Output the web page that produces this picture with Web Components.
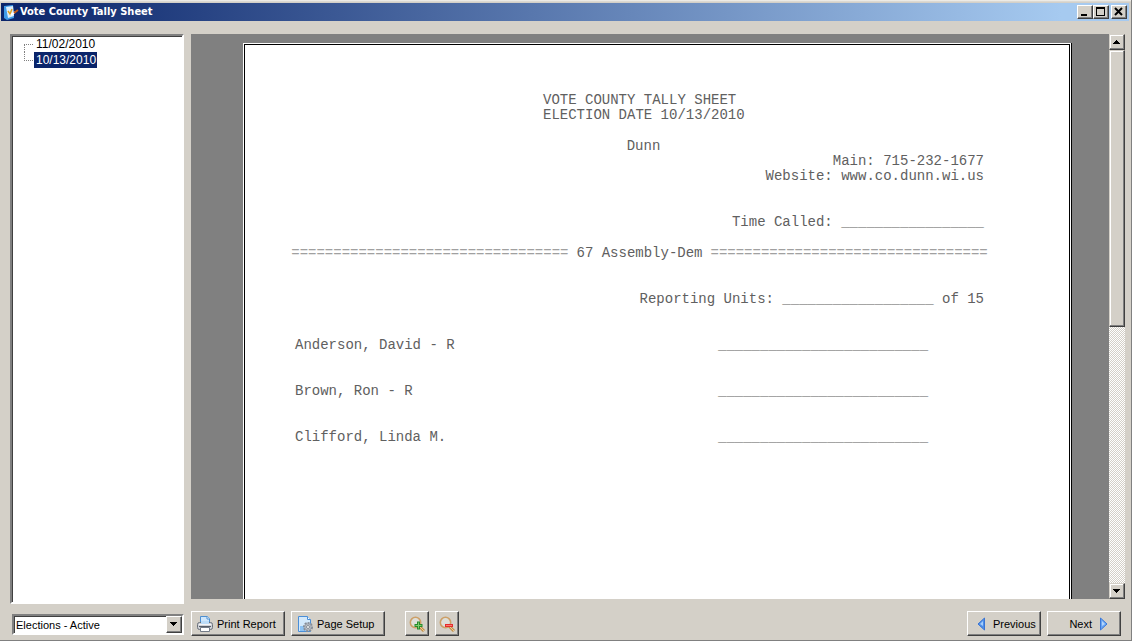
<!DOCTYPE html>
<html lang="en">
<head>
<meta charset="utf-8">
<title>Vote County Tally Sheet</title>
<style>
html, body { height: 100%; margin: 0; }
body { background: #d4d0c8; overflow: hidden; font: 11px/14px "Liberation Sans", Arial, sans-serif; color: #000; }
</style>
</head>
<body>
<tally-window></tally-window>
<script>
const define = (name, html, setup) => customElements.define(name, class extends HTMLElement {
  connectedCallback() {
    if (this.shadowRoot) return;
    const t = document.createElement('template');
    t.innerHTML = html;
    this.attachShadow({ mode: 'open' }).append(t.content.cloneNode(true));
    if (setup) setup(this, this.shadowRoot);
  }
});

const icons = {
  app: `<path d="M1 2l9-1 1 13-7 2-3-2z" fill="#3f9be8"/><path d="M3 3l7-1 1 10-6 2z" fill="#dceefb"/><path d="M5 7l2 3 2-5" fill="none" stroke="#e0a020" stroke-width="1.500"/><path d="M8 11l4-3" stroke="#fff" stroke-width="2"/><path d="M11 9l4-3" stroke="#c05818" stroke-width="2"/>`,
  print: `<path d="M3.500 8V.5h7l2 2V8z" fill="#cfe6fb" stroke="#4d8fd0"/><path d="M10 .5V3h3" fill="#fff" stroke="#4d8fd0"/><rect x=".5" y="6.500" width="15" height="7" rx="2" fill="#cfd2d8" stroke="#6b717b"/><path d="M4 5h8v3H4z" fill="#bcdcf8"/><path d="M2 8.500h12" stroke="#f4f4f6"/><path d="M3.500 11.500h9v4h-9z" fill="#fff" stroke="#737b87"/><path d="M2 10.500h12" stroke="#565d68"/>`,
  setup: `<path d="M1.500.5h9l3 3v12h-12z" fill="#d3e9fc" stroke="#4a8fd8"/><path d="M10.500.5v3h3" fill="#fff" stroke="#4a8fd8"/><path d="M3 10h8v5H3z" fill="#8fc3f3"/><circle cx="11" cy="11" r="4" fill="#c4c9d0" stroke="#858c97" stroke-width="2" stroke-dasharray="2 1"/><circle cx="11" cy="11" r="3" fill="#c4c9d0" stroke="#a3a9b3"/><circle cx="11" cy="11" r="1.500" fill="#fff" stroke="#858c97"/>`,
  zoomin: `<path d="M10 10l5 5" stroke="#c49149" stroke-width="3"/><path d="M10 10l5 5" stroke="#edc993"/><circle cx="6.500" cy="6.500" r="5.200" fill="#dedfda" stroke="#cda068" stroke-width="1.600"/><path d="M9.500 5.500v8M5.500 9.500h8" stroke="#288b2c" stroke-width="3"/><path d="M9.500 6.500v6M6.500 9.500h6" stroke="#7fce70"/>`,
  zoomout: `<path d="M10 10l5 5" stroke="#c49149" stroke-width="3"/><path d="M10 10l5 5" stroke="#edc993"/><circle cx="6.500" cy="6.500" r="5.200" fill="#dedfda" stroke="#cda068" stroke-width="1.600"/><path d="M6 9.500h8" stroke="#e42d2d" stroke-width="3"/><path d="M7 9.500h6" stroke="#ff7b72"/>`,
  prev: `<path d="M11.500 2v12L5 8z" fill="#4f90ea" stroke="#3a74d2"/><path d="M10 5v5L7 8z" fill="#a5cdfb"/>`,
  next: `<path d="M4.500 2v12L11 8z" fill="#6ba6f3" stroke="#3b78d8"/><path d="M6 5v5l3-2z" fill="#b3d5fc"/>`
};
const svg = n => `<svg viewBox="0 0 16 16" width="16" height="16" aria-hidden="true">${icons[n]}</svg>`;

define('app-icon', `<style>:host{display:block;width:16px;height:16px;flex:none}svg{display:block}</style>`,
  (el, root) => root.append(document.createRange().createContextualFragment(svg(el.getAttribute('name')))));

define('tool-button', `
<style>
:host { display: block; }
button { box-sizing: border-box; width: 100%; height: 25px; margin: 0; padding: 0 var(--pad, 5px); display: flex; align-items: center; justify-content: var(--justify, flex-start); gap: 4px; background: #d4d0c8; color: #000; font: inherit; white-space: nowrap;
  border: 1px solid; border-color: #fff #404040 #404040 #fff; border-radius: 0; box-shadow: inset -1px -1px #808080; }
</style>
<button type="button"><slot></slot></button>`, (el, root) => {
  if (el.title) root.querySelector('button').setAttribute('aria-label', el.title);
});

define('title-bar', `
<style>
:host { display: flex; align-items: center; gap: 1px; height: 18px; padding: 0 2px; background: linear-gradient(90deg, #0a246a, #a6caf0 94%); color: #fff; }
h1 { flex: 1; margin: 0; font: bold 11px/18px "DejaVu Sans Condensed", "DejaVu Sans", sans-serif; font-stretch: condensed; }
div { display: flex; }
button { box-sizing: border-box; width: 16px; height: 14px; padding: 0; background: #d4d0c8; border: 1px solid; border-color: #fff #404040 #404040 #fff; box-shadow: inset -1px -1px #808080; }
.close { margin-left: 2px; }
svg { display: block; }
</style>
<app-icon name="app"></app-icon>
<h1><slot></slot></h1>
<div>
<button type="button" aria-label="Minimize"><svg width="14" height="12"><path d="M3 8h6v2H3z"/></svg></button>
<button type="button" aria-label="Maximize"><svg width="14" height="12"><path d="M2 1h9v9H2zM3 3v6h7V3z" fill-rule="evenodd"/></svg></button>
<button type="button" class="close" aria-label="Close"><svg width="14" height="12"><path d="M3 2l7 7M10 2L3 9" stroke="#000" stroke-width="2"/></svg></button>
</div>`);

define('election-tree', `
<style>
:host { display: block; box-sizing: border-box; background: #fff; border: 2px solid; border-color: #808080 #fff #fff #808080; box-shadow: inset 1px 1px #404040; font-size: 12px; }
ul { list-style: none; margin: 0; padding: 0 0 0 12px; }
li { display: flex; height: 16px; }
li::before { content: ""; box-sizing: border-box; width: 9px; height: 8px; border: 1px dotted #808080; border-width: 1px 0 0 1px; margin-top: 8px; }
li:last-child::before { border-width: 0 0 1px 1px; margin-top: 0; height: 9px; }
a { color: #000; text-decoration: none; line-height: 16px; padding: 0 1px 0 2px; margin-left: 1px; }
a[aria-current] { background: #0a246a; color: #fff; }
</style>
<ul><li><a href="#nov">11/02/2010</a></li><li><a href="#oct" aria-current="true">10/13/2010</a></li></ul>`);

define('tally-report', `
<style>
:host { display: block; background: #fff; border: 1px solid #fff; border-bottom: 0; box-shadow: 1px 0 #000; box-sizing: border-box; }
article { box-sizing: border-box; min-height: 100%; border: 1px solid #000; border-bottom: 0; padding: 48px 85px 0 50px; font: 14px/15px "Liberation Mono", "Courier New", monospace; color: #606060; white-space: pre; display: flex; flex-direction: column; gap: 31px; }
h2, p { margin: 0; font: inherit; }
.head { display: flex; flex-direction: column; gap: 16px; }
.title { width: 202px; margin-left: 248px; }
.county { text-align: center; margin-left: 8px; }
.right { text-align: right; }
.race { display: flex; justify-content: center; gap: 8px; margin-top: -15px; }
.race span { color: #a0a0a0; }
.row { display: grid; grid-template-columns: 423px 1fr; }
</style>
<article>
<div class="head">
<h2 class="title">VOTE COUNTY TALLY SHEET
ELECTION DATE 10/13/2010</h2>
<div><p class="county">Dunn</p><p class="right">Main: 715-232-1677
Website: www.co.dunn.wi.us</p></div>
</div>
<p class="right">Time Called: _________________</p>
<h2 class="race"><span>=================================</span>67 Assembly-Dem<span>=================================</span></h2>
<p class="right">Reporting Units: __________________ of 15</p>
<div class="row"><span>Anderson, David - R</span><span>_________________________</span></div>
<div class="row"><span>Brown, Ron - R</span><span>_________________________</span></div>
<div class="row"><span>Clifford, Linda M.</span><span>_________________________</span></div>
</article>`);

define('scroll-bar', `
<style>
:host { display: flex; flex-direction: column; flex: none; width: 16px; background: repeating-conic-gradient(#fff 0 25%, #d4d0c8 0 50%) 0 0 / 2px 2px; }
button, .thumb { box-sizing: border-box; width: 16px; padding: 0; background: #d4d0c8; border: 1px solid; border-color: #d4d0c8 #404040 #404040 #d4d0c8; box-shadow: inset -1px -1px #808080, inset 1px 1px #fff; }
button { height: 16px; flex: none; }
.track { flex: 1; }
.thumb { height: 52%; }
svg { display: block; }
</style>
<button type="button" aria-label="Scroll up"><svg width="14" height="14"><path d="M3 9h7v-1h-1v-1h-1v-1h-1v-1h-1v1h-1v1h-1v1h-1z"/></svg></button>
<div class="track"><div class="thumb"></div></div>
<button type="button" aria-label="Scroll down"><svg width="14" height="14"><path d="M3 5h7v1h-1v1h-1v1h-1v1h-1v-1h-1v-1h-1v-1h-1z"/></svg></button>`);

define('election-filter', `
<style>
:host { display: flex; box-sizing: border-box; height: 21px; position: relative; background: #fff; border: 2px solid; border-color: #808080 #fff #fff #808080; box-shadow: inset 1px 1px #404040; }
select { appearance: none; flex: 1; min-width: 0; border: 0; margin: 0; padding: 0 17px 0 2px; background: none; font: inherit; color: #000; }
i { position: absolute; right: 0; top: 0; box-sizing: border-box; width: 16px; height: 17px; background: #d4d0c8; border: 1px solid; border-color: #fff #404040 #404040 #fff; box-shadow: inset -1px -1px #808080; pointer-events: none; }
svg { display: block; }
</style>
<select aria-label="Elections"><option>Elections - Active</option></select>
<i><svg width="14" height="15"><path d="M3 5h7v1h-1v1h-1v1h-1v1h-1v-1h-1v-1h-1v-1h-1z"/></svg></i>`);

define('tally-window', `
<style>
:host { display: grid; box-sizing: border-box; height: 100vh; grid-template: 18px minmax(0, 1fr) 41px / 183px minmax(0, 1fr); padding: 3px 2px 0 1px; border: solid #808080; border-width: 0 1px 1px 0; background: linear-gradient(#f4f3f0, #d4d0c8 2px); }
title-bar { grid-column: 1 / 3; }
election-tree { margin: 13px 0 -5px 9px; }
.viewer { display: flex; margin: 13px 4px 0 7px; min-height: 0; }
.canvas { flex: 1; min-width: 0; display: flex; overflow: hidden; background: #808080; padding: 9px 38px 0 52px; }
tally-report { flex: 1; min-width: 0; }
election-filter { margin: 15px 0 0 11px; }
footer { display: flex; gap: 6px; padding: 12px 8px 0 7px; }
.wide { width: 94px; }
.icon { width: 24px; --pad: 3px; }
.nav { width: 74px; }
.next { --justify: flex-end; --pad: 8px; }
.first { margin-left: 14px; }
.push { margin-left: auto; }
</style>
<title-bar>Vote County Tally Sheet</title-bar>
<election-tree></election-tree>
<div class="viewer"><div class="canvas"><tally-report></tally-report></div><scroll-bar></scroll-bar></div>
<election-filter></election-filter>
<footer>
<tool-button class="wide"><app-icon name="print"></app-icon>Print Report</tool-button>
<tool-button class="wide"><app-icon name="setup"></app-icon>Page Setup</tool-button>
<tool-button class="icon first" title="Zoom in"><app-icon name="zoomin"></app-icon></tool-button>
<tool-button class="icon" title="Zoom out"><app-icon name="zoomout"></app-icon></tool-button>
<tool-button class="nav push"><app-icon name="prev"></app-icon>Previous</tool-button>
<tool-button class="nav next">Next<app-icon name="next"></app-icon></tool-button>
</footer>`);
</script>
</body>
</html>
